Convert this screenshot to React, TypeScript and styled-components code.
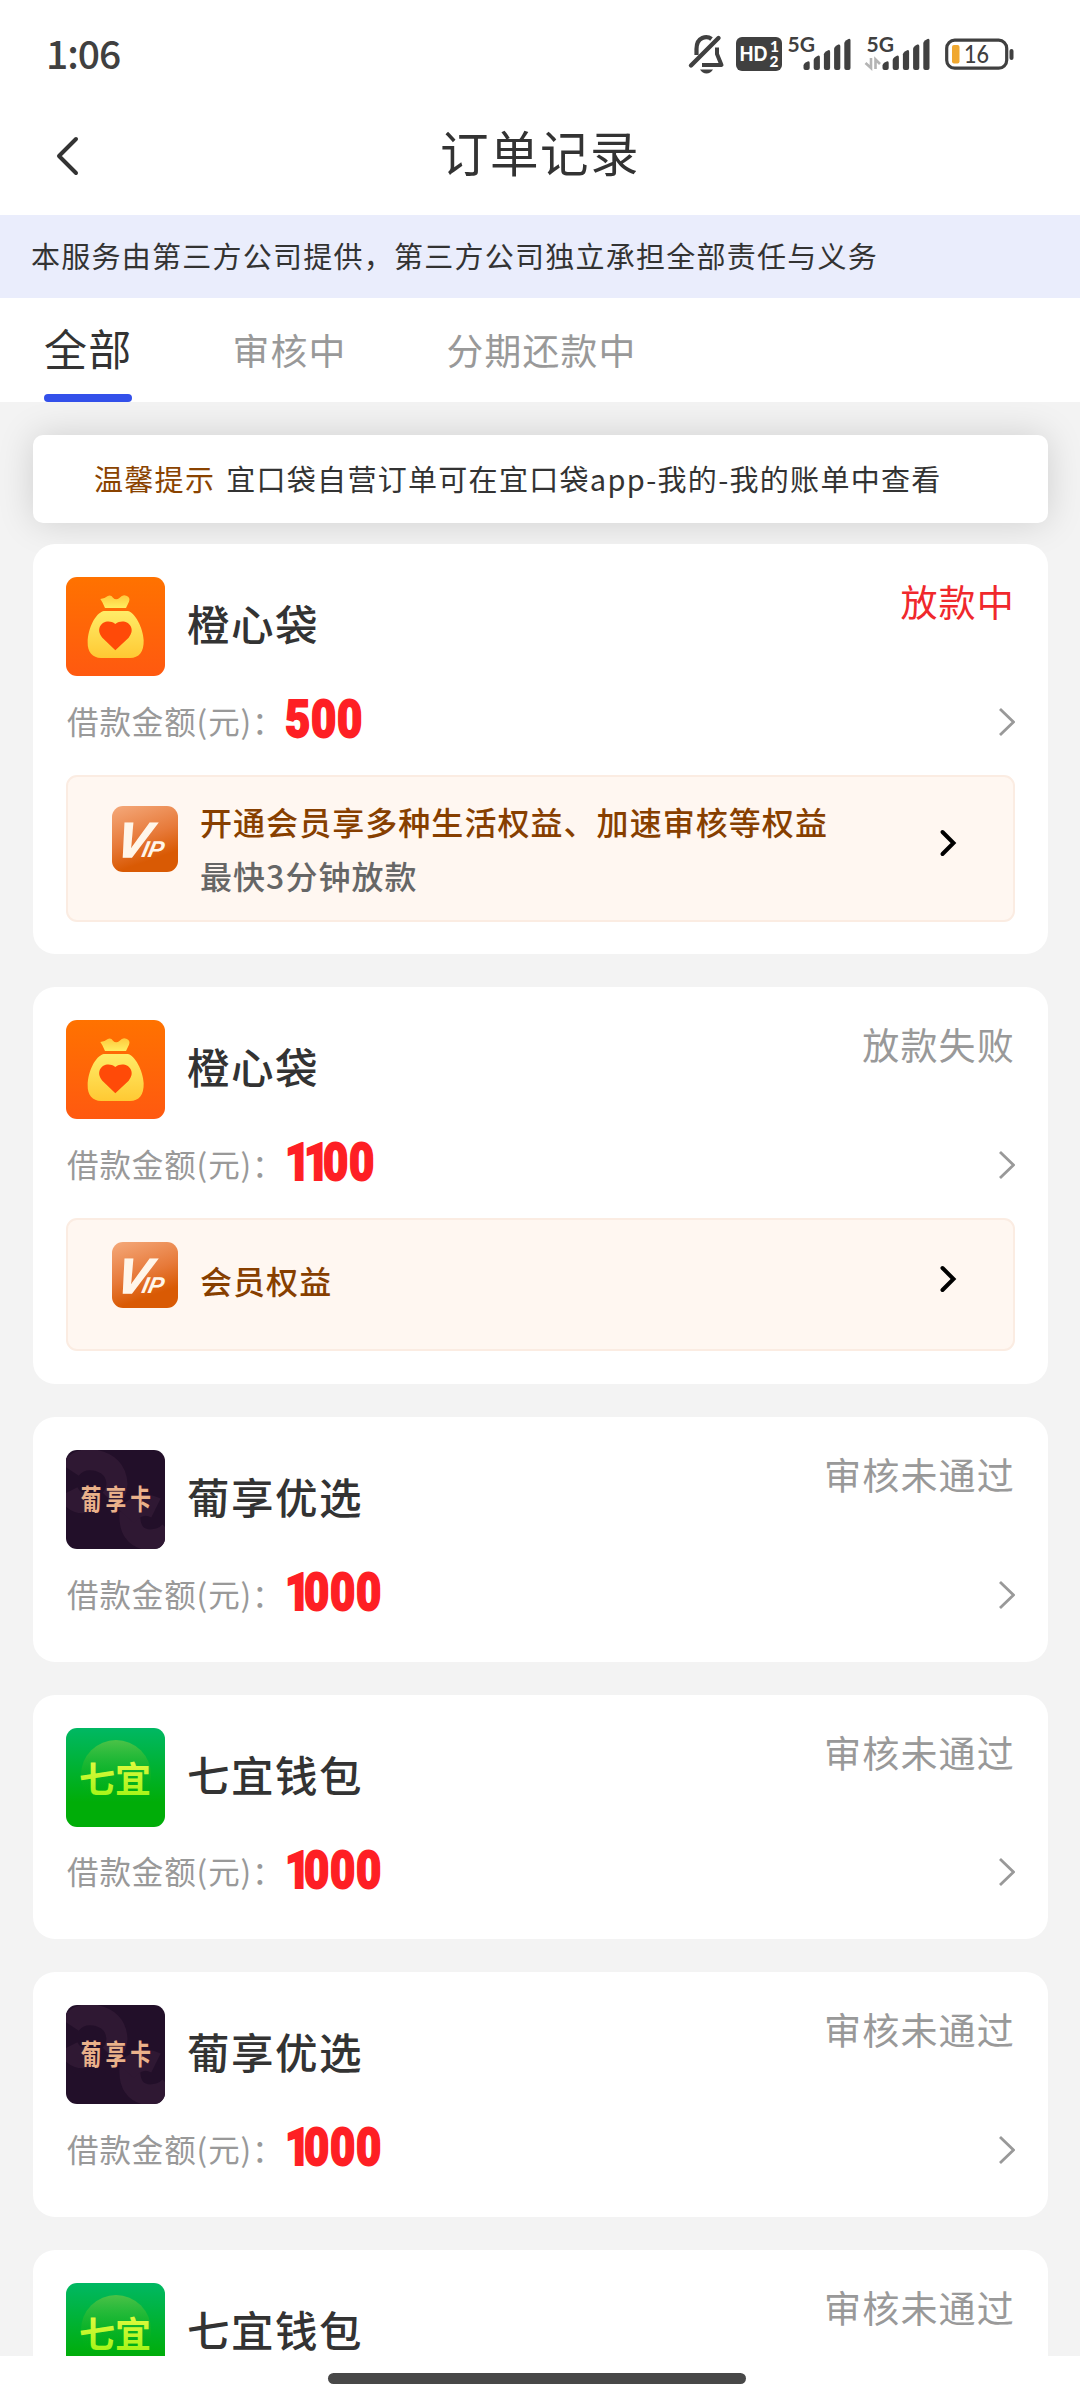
import React from "react";
import styled, { createGlobalStyle } from "styled-components";

const sans = `"Noto Sans CJK SC", "Noto Sans", sans-serif`;

const GlobalStyle = createGlobalStyle`
  *, *::before, *::after { box-sizing: border-box; }
  html, body { margin: 0; padding: 0; }
  body { background: #fff; font-family: ${sans}; color: #333; }
  svg { display: block; flex: none; }
`;

const Screen = styled.div`
  width: 1080px;
  height: 2400px;
  overflow: hidden;
  display: flex;
  flex-direction: column;
  background: #fff;
`;

const StatusBar = styled.header`
  height: 108px;
  flex: none;
  display: flex;
  align-items: center;
  justify-content: space-between;
  padding: 0 65px 8px 46px;
`;

const Clock = styled.span`
  margin-top: 3px;
  font-size: 39px;
  line-height: 40px;
  font-weight: 500;
  letter-spacing: -1px;
  color: #404040;
`;

const NavBar = styled.nav`
  height: 107px;
  flex: none;
  display: grid;
  grid-template-columns: 140px 1fr 140px;
  align-items: center;
  padding-bottom: 11px;
`;

const BackButton = styled.button`
  border: 0;
  background: none;
  padding: 0 0 0 55px;
  height: 60px;
  display: flex;
  align-items: center;
`;

const Title = styled.h1`
  margin: 0 0 11px;
  text-align: center;
  font-size: 48.5px;
  line-height: 60px;
  font-weight: 400;
  letter-spacing: 1.5px;
  color: #333;
`;

const Notice = styled.div`
  height: 83px;
  flex: none;
  display: flex;
  align-items: center;
  padding: 0 0 3px 31px;
  background: #eaedfc;
  font-size: 29px;
  letter-spacing: 1.25px;
  color: #333;
  white-space: nowrap;
`;

const Tabs = styled.div`
  height: 104px;
  flex: none;
  display: flex;
  align-items: stretch;
  gap: 100px;
  padding-left: 44px;
  background: #fff;
`;

const Tab = styled.div<{ $active?: boolean }>`
  display: flex;
  flex-direction: column;
  justify-content: space-between;
  font-size: ${(p) => (p.$active ? 43 : 36.8)}px;
  letter-spacing: 1.2px;
  line-height: ${(p) => (p.$active ? 98 : 103)}px;
  color: ${(p) => (p.$active ? "#333" : "#999")};
  white-space: nowrap;
`;

const TabLabel = styled.span`
  height: 96px;
`;

const TabLine = styled.i`
  height: 8px;
  border-radius: 4px;
  background: #3350ea;
`;

const List = styled.main`
  height: 1954px;
  flex: none;
  overflow: hidden;
  display: flex;
  flex-direction: column;
  padding: 33px 32px 0 33px;
  background: #f3f3f3;
`;

const Tip = styled.div`
  height: 88px;
  flex: none;
  display: flex;
  align-items: center;
  gap: 11px;
  padding: 0 0 3px 61px;
  margin-bottom: 21px;
  border-radius: 10px;
  background: #fff;
  box-shadow: 0 0 36px rgba(0, 0, 0, 0.15);
  font-size: 29px;
  letter-spacing: 1.3px;
  white-space: nowrap;
`;

const TipTag = styled.span`
  color: #8a4300;
`;

const Card = styled.article<{ $h: number }>`
  position: relative;
  height: ${(p) => p.$h}px;
  flex: none;
  padding: 33px 33px 0;
  margin-bottom: 33px;
  border-radius: 22px;
  background: #fff;
`;

const CardHead = styled.div`
  height: 99px;
  display: flex;
  align-items: center;
`;

const Logo = styled.div<{ $bg: string }>`
  width: 99px;
  height: 99px;
  flex: none;
  overflow: hidden;
  border-radius: 11px;
  background: ${(p) => p.$bg};
`;

const Name = styled.h2`
  margin: 0 0 7px 22px;
  flex: 1;
  font-size: 42.5px;
  line-height: 60px;
  font-weight: 500;
  letter-spacing: 1.5px;
  color: #333;
`;

const State = styled.span<{ $hot?: boolean }>`
  align-self: flex-start;
  margin-top: -3px;
  font-size: 37px;
  line-height: 54px;
  letter-spacing: 1.2px;
  color: ${(p) => (p.$hot ? "#f0282c" : "#999")};
`;

const AmountRow = styled.div`
  height: 98.5px;
  display: flex;
  align-items: center;
  padding-bottom: 7px;
`;

const AmountLabel = styled.span`
  width: 219px;
  margin-top: -4px;
  padding-left: 1px;
  font-size: 31.5px;
  letter-spacing: 0.9px;
  color: #999;
  white-space: nowrap;
`;

const Amount = styled.span`
  flex: 1;
  margin-top: -5px;
  font-family: Roboto, sans-serif;
  font-size: 52.5px;
  line-height: 60px;
  font-weight: 900;
  letter-spacing: 0.9px;
  color: #fe1f24;
  -webkit-text-stroke: 1.8px #fe1f24;
  transform: scaleX(0.83);
  transform-origin: left center;
`;

const LeadingOne = styled.span`
  letter-spacing: -7.5px;
`;

const Member = styled.section<{ $h: number }>`
  height: ${(p) => p.$h}px;
  display: flex;
  align-items: flex-start;
  padding: ${(p) => (p.$h > 140 ? 29 : 22)}px 56px 0 44px;
  border: 2px solid #fbece2;
  border-radius: 11px;
  background: #fff7f1;
`;

const MemberText = styled.div<{ $single: boolean }>`
  flex: 1;
  margin: ${(p) => (p.$single ? 13 : -10)}px 0 0 22px;
  font-size: 32px;
  font-weight: 500;
  letter-spacing: 1.05px;
`;

const MemberTitle = styled.div`
  line-height: 50px;
  color: #873f00;
`;

const MemberSub = styled.div`
  margin-top: 4px;
  line-height: 50px;
  color: #666;
`;

const MemberArrow = styled.div`
  margin-top: 23px;
`;

const HomeArea = styled.footer`
  flex: 1;
  display: flex;
  justify-content: center;
  padding: 17px 6px 0 0;
`;

const HomeBar = styled.div`
  width: 418px;
  height: 11px;
  border-radius: 6px;
  background: #484848;
`;

function Signal({ x }: { x: number }) {
  return (
    <g fill="#404040">
      <text x={x - 0.5} y="32" fontFamily="Lato, sans-serif" fontWeight="700" fontSize="21.5" textLength="27.5" lengthAdjust="spacingAndGlyphs">5G</text>
      {[0, 1, 2, 3, 4].map((i) => {
        const l = x + 15.5 + i * 10.2;
        const top = 44 - i * 5.6;
        return (
          <path
            key={i}
            d={`M${l} ${top + 1.5}Q${l} ${top} ${l + 2} ${top - 1.4}L${l + 4.2} ${top - 2.6}Q${l + 6.2} ${top - 3.4} ${l + 6.2} ${top - 1}V48Q${l + 6.2} 50 ${l + 4.2} 50H${l + 2}Q${l} 50 ${l} 48Z`}
          />
        );
      })}
    </g>
  );
}

function StatusIcons() {
  return (
    <svg width="328" height="60" viewBox="0 0 328 60">
      <g fill="none" stroke="#404040" strokeLinecap="round" strokeLinejoin="round">
        <path d="M4 45.500L31.500 18" strokeWidth="4.400" />
        <path d="M9.500 35V29C9.500 16.500 20 15.500 24.500 19" strokeWidth="4.200" strokeLinecap="butt" />
        <path d="M30 27.500V34L34.500 45H15" strokeWidth="4" strokeLinecap="butt" />
      </g>
      <path d="M13 49.500H26Q23.500 53.500 19.500 53.500T13 49.500Z" fill="#404040" />
      <rect x="49" y="17" width="46" height="34" rx="6" fill="#404040" />
      <g fill="#fff" fontFamily="Lato, sans-serif" fontWeight="900">
        <text x="52.500" y="41" fontSize="20.500" textLength="28" lengthAdjust="spacingAndGlyphs">HD</text>
        <text x="83" y="32" fontSize="15.500">1</text>
        <text x="82.500" y="47" fontSize="15.500">2</text>
      </g>
      <Signal x={101} />
      <Signal x={180} />
      <g fill="none" stroke="#b4b4b4" strokeWidth="2.600">
        <path d="M184 38V48L178.500 43M188.500 49V39.500L193 44" />
      </g>
      <rect x="259.700" y="20.200" width="60" height="28" rx="8" fill="none" stroke="#404040" strokeWidth="3.200" />
      <path d="M324.500 31V38" stroke="#404040" strokeWidth="4" strokeLinecap="round" />
      <rect x="265" y="25" width="7.500" height="18.500" rx="2" fill="#f0a830" />
      <text x="277" y="43" fontFamily="Lato, sans-serif" fontWeight="500" fontSize="24" fill="#404040" textLength="25" lengthAdjust="spacingAndGlyphs">16</text>
    </svg>
  );
}

function BagLogo() {
  return (
    <Logo $bg="linear-gradient(#ff7200, #ff5910)">
      <svg width="99" height="99" viewBox="0 0 297 297">
        <defs>
          <linearGradient id="bag" x1="0" y1="0" x2="0" y2="1">
            <stop offset="0" stopColor="#ffec68" />
            <stop offset="1" stopColor="#ffc933" />
          </linearGradient>
          <linearGradient id="knot" x1="0" y1="0" x2="0" y2="1">
            <stop offset="0" stopColor="#ffc83c" />
            <stop offset="1" stopColor="#ffee60" />
          </linearGradient>
        </defs>
        <path d="M103 66Q115 66 124 58Q134 51 141 62Q150 71 161 62Q170 51 181 56Q194 60 189 74L180 93H117L109 76Z" fill="url(#knot)" />
        <path d="M113 102H185C206 105 232 153 233 190C234 225 219 243 192 243H105C80 243 64 225 65 196C66 153 88 109 113 102Z" fill="url(#bag)" />
        <path d="M148 220L109 182C82 150 119 119 148 141C177 119 215 150 188 182Z" fill="#ff4a08" />
      </svg>
    </Logo>
  );
}

function GrapeLogo() {
  return (
    <Logo $bg="#220f29">
      <svg width="99" height="99" viewBox="0 0 99 99">
        <g fill="none" stroke="#2f1833" strokeWidth="21">
          <path d="M4 20Q12 8 28 10Q50 14 51 34Q50 44 44 50" />
          <path d="M2 42Q10 58 26 50" />
          <path d="M64 62Q62 88 84 90Q96 90 104 82" />
          <path d="M60 66Q74 50 90 58" />
        </g>
        <g transform="scale(0.74 1)">
          <text x="20" y="60.500" fontFamily="Noto Sans CJK SC" fontWeight="700" fontSize="28" letterSpacing="5.500" fill="#eab18a">葡享卡</text>
        </g>
      </svg>
    </Logo>
  );
}

function SevenLogo() {
  return (
    <Logo $bg="linear-gradient(#00b863, #00ad08 75%)">
      <svg width="99" height="99" viewBox="0 0 99 99">
        <defs>
          <linearGradient id="disc" x1="0" y1="0" x2="0" y2="1">
            <stop offset="0" stopColor="#4cc247" />
            <stop offset="0.800" stopColor="#00ae0c" stopOpacity="0" />
          </linearGradient>
          <linearGradient id="lime" x1="0" y1="0" x2="0" y2="1">
            <stop offset="0" stopColor="#f2fb4a" />
            <stop offset="1" stopColor="#98f410" />
          </linearGradient>
        </defs>
        <circle cx="50" cy="47" r="35" fill="url(#disc)" />
        <text x="13" y="65" fontFamily="Noto Sans CJK SC" fontWeight="700" fontSize="36" fill="url(#lime)">七宜</text>
      </svg>
    </Logo>
  );
}

function VipIcon() {
  return (
    <svg width="66" height="66" viewBox="0 0 66 66">
      <defs>
        <linearGradient id="vip" x1="0.200" y1="0" x2="0.550" y2="1">
          <stop offset="0" stopColor="#f3a474" />
          <stop offset="0.500" stopColor="#e77a3a" />
          <stop offset="0.850" stopColor="#d95a04" />
        </linearGradient>
      </defs>
      <rect width="66" height="66" rx="11" fill="url(#vip)" />
      <g transform="translate(0 50.500) skewX(-12)">
        <text x="2" y="0" fill="#fff6ea" stroke="#fff6ea" fontFamily="Liberation Sans" fontStyle="italic" fontWeight="700" fontSize="49" strokeWidth="1.500">
          V<tspan dx="-6" fontSize="23" strokeWidth="0">IP</tspan>
        </text>
      </g>
    </svg>
  );
}

const logos = { bag: BagLogo, grape: GrapeLogo, seven: SevenLogo };

type Order = {
  logo: keyof typeof logos;
  name: string;
  state: string;
  hot?: boolean;
  amount: string;
  member?: string[];
  height: number;
};

const orders: Order[] = [
  { logo: "bag", name: "橙心袋", state: "放款中", hot: true, amount: "500", member: ["开通会员享多种生活权益、加速审核等权益", "最快3分钟放款"], height: 410 },
  { logo: "bag", name: "橙心袋", state: "放款失败", amount: "1100", member: ["会员权益"], height: 397 },
  { logo: "grape", name: "葡享优选", state: "审核未通过", amount: "1000", height: 244.6 },
  { logo: "seven", name: "七宜钱包", state: "审核未通过", amount: "1000", height: 244.6 },
  { logo: "grape", name: "葡享优选", state: "审核未通过", amount: "1000", height: 244.6 },
  { logo: "seven", name: "七宜钱包", state: "审核未通过", amount: "1000", height: 244.6 },
];

function AmountValue({ value }: { value: string }) {
  const ones = value.match(/^1*/)![0];
  return (
    <Amount>
      {ones && <LeadingOne>{ones}</LeadingOne>}
      {value.slice(ones.length)}
    </Amount>
  );
}

function OrderCard({ order }: { order: Order }) {
  const Mark = logos[order.logo];
  const single = order.member?.length === 1;
  return (
    <Card $h={order.height}>
      <CardHead>
        <Mark />
        <Name>{order.name}</Name>
        <State $hot={order.hot}>{order.state}</State>
      </CardHead>
      <AmountRow>
        <AmountLabel>借款金额(元)：</AmountLabel>
        <AmountValue value={order.amount} />
        <svg width="18" height="30" viewBox="0 0 18 30">
          <path d="M3 2L16.500 15L3 28" fill="none" stroke="#999" strokeWidth="2.800" />
        </svg>
      </AmountRow>
      {order.member && (
        <Member $h={single ? 133 : 147}>
          <VipIcon />
          <MemberText $single={!!single}>
            <MemberTitle>{order.member[0]}</MemberTitle>
            {order.member[1] && <MemberSub>{order.member[1]}</MemberSub>}
          </MemberText>
          <MemberArrow>
            <svg width="18" height="28" viewBox="0 0 18 28">
              <path d="M3.500 3L14.500 14L3.500 25" fill="none" stroke="#000" strokeWidth="4" strokeLinecap="round" />
            </svg>
          </MemberArrow>
        </Member>
      )}
    </Card>
  );
}

export default function App() {
  return (
    <>
      <GlobalStyle />
      <Screen>
        <StatusBar>
          <Clock>1:06</Clock>
          <StatusIcons />
        </StatusBar>
        <NavBar>
          <BackButton aria-label="返回">
            <svg width="25" height="40" viewBox="0 0 25 40">
              <path d="M21 3L4 20L21 37" fill="none" stroke="#333" strokeWidth="4" strokeLinecap="round" strokeLinejoin="round" />
            </svg>
          </BackButton>
          <Title>订单记录</Title>
        </NavBar>
        <Notice>本服务由第三方公司提供，第三方公司独立承担全部责任与义务</Notice>
        <Tabs>
          <Tab $active>
            <TabLabel>全部</TabLabel>
            <TabLine />
          </Tab>
          <Tab>
            <TabLabel>审核中</TabLabel>
          </Tab>
          <Tab>
            <TabLabel>分期还款中</TabLabel>
          </Tab>
        </Tabs>
        <List>
          <Tip>
            <TipTag>温馨提示</TipTag>
            <span>宜口袋自营订单可在宜口袋app-我的-我的账单中查看</span>
          </Tip>
          {orders.map((order, i) => (
            <OrderCard key={i} order={order} />
          ))}
        </List>
        <HomeArea>
          <HomeBar />
        </HomeArea>
      </Screen>
    </>
  );
}
